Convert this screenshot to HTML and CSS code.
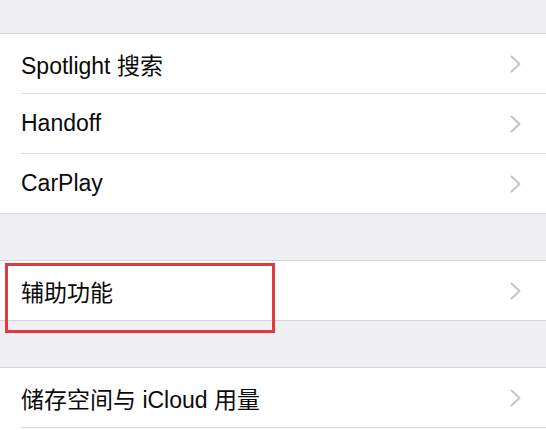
FILE: index.html
```html
<!DOCTYPE html>
<html lang="zh-CN">
<head>
<meta charset="utf-8">
<title>设置</title>
<link rel="stylesheet" href="styles.css">
</head>
<body>
<div class="page">
  <div class="gap gap-top"></div>
  <div class="group">
    <div class="row"><span class="label">Spotlight 搜索</span><svg class="chev" viewBox="0 0 11 18" width="11" height="18"><path d="M1.5 1.5 L9.5 9 L1.5 16.5"/></svg></div>
    <div class="row"><span class="label">Handoff</span><svg class="chev" viewBox="0 0 11 18" width="11" height="18"><path d="M1.5 1.5 L9.5 9 L1.5 16.5"/></svg></div>
    <div class="row last"><span class="label">CarPlay</span><svg class="chev" viewBox="0 0 11 18" width="11" height="18"><path d="M1.5 1.5 L9.5 9 L1.5 16.5"/></svg></div>
  </div>
  <div class="gap"></div>
  <div class="group highlight-group">
    <div class="row last"><span class="label">辅助功能</span><svg class="chev" viewBox="0 0 11 18" width="11" height="18"><path d="M1.5 1.5 L9.5 9 L1.5 16.5"/></svg></div>
    <div class="highlight"></div>
  </div>
  <div class="gap"></div>
  <div class="group">
    <div class="row"><span class="label">储存空间与 iCloud 用量</span><svg class="chev" viewBox="0 0 11 18" width="11" height="18"><path d="M1.5 1.5 L9.5 9 L1.5 16.5"/></svg></div>
    <div class="row last"><span class="label">&nbsp;</span></div>
  </div>
</div>
</body>
</html>
```
FILE: styles.css
```css
html, body {
  margin: 0;
  padding: 0;
  background: #efeff4;
}
.page {
  width: 546px;
  height: 430px;
  overflow: hidden;
  font-family: "Liberation Sans", "Noto Sans CJK SC", sans-serif;
  color: #0a0a0a;
}
.gap {
  height: 46px;
}
.gap-top {
  height: 33px;
}
.group {
  background: #fff;
  border-top: 1px solid #d6d6da;
  border-bottom: 1px solid #d6d6da;
}
.row {
  height: 59px;
  display: flex;
  align-items: center;
  justify-content: space-between;
  padding: 0 25px 0 21px;
  position: relative;
}
.row::after {
  content: "";
  position: absolute;
  left: 21px;
  right: 0;
  bottom: -1px;
  height: 1px;
  background: #dcdce0;
}
.row + .row {
  margin-top: 1px;
}
.row.last::after {
  display: none;
}
.label {
  font-size: 23px;
}
.chev {
  fill: none;
  stroke: #c4c4c9;
  stroke-width: 2;
  stroke-linecap: round;
  stroke-linejoin: round;
}
.highlight-group {
  position: relative;
}
.highlight {
  position: absolute;
  left: 5px;
  top: 2px;
  width: 270px;
  height: 70px;
  border: 3px solid #e0393e;
  box-sizing: border-box;
}
```
